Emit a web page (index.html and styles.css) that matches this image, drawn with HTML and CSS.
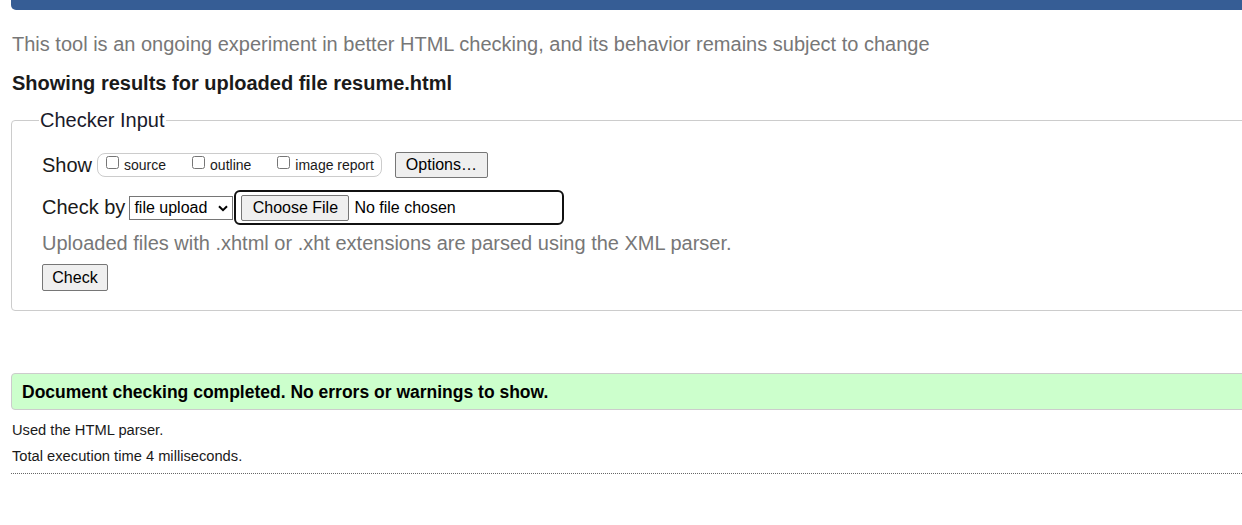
FILE: index.html
```html
<!DOCTYPE html>
<html lang="en">
<head>
<meta charset="utf-8">
<title>Nu Html Checker</title>
<link rel="stylesheet" href="styles.css">
</head>
<body>
<div class="page">
  <div class="topbar"></div>
  <p class="intro">This tool is an ongoing experiment in better HTML checking, and its behavior remains subject to change</p>
  <h2 class="showing">Showing results for uploaded file resume.html</h2>
  <fieldset class="checker">
    <legend>Checker Input</legend>
    <div class="row show-row">
      <span class="lbl">Show</span>
      <span class="opts">
        <label class="opt"><input type="checkbox">source</label>
        <label class="opt"><input type="checkbox">outline</label>
        <label class="opt"><input type="checkbox">image report</label>
      </span>
      <button class="btn options" type="button">Options…</button>
    </div>
    <div class="row by-row">
      <span class="lbl">Check by</span>
      <span class="selwrap">
        <select class="sel"><option>file upload</option></select>
        <svg class="chev" width="10" height="7" viewBox="0 0 10 7"><path d="M1 1.2 L5 5.2 L9 1.2" fill="none" stroke="#000" stroke-width="2"/></svg>
      </span>
      <span class="filewrap"><span class="btn choose">Choose File</span><span class="nofile">No file chosen</span></span>
    </div>
    <p class="hint">Uploaded files with .xhtml or .xht extensions are parsed using the XML parser.</p>
    <button class="btn check" type="button">Check</button>
  </fieldset>
  <div class="success"><p>Document checking completed. No errors or warnings to show.</p></div>
  <p class="details">Used the HTML parser.</p>
  <p class="details">Total execution time 4 milliseconds.</p>
  <hr class="dots">
</div>
</body>
</html>
```

FILE: styles.css
```css
html { overflow: hidden; }
body {
  margin: 0;
  font-family: "Liberation Sans", Arial, sans-serif;
  color: #111;
  background: #fff;
}
.page {
  padding-left: 11px;
  margin-right: -40px;
}
.topbar {
  height: 10px;
  background: #365d95;
  border-bottom-left-radius: 5px;
}
.intro {
  margin: 22px 0 0 1px;
  font-size: 20px;
  line-height: 24px;
  color: #777;
}
.showing {
  margin: 15px 0 0 1px;
  font-size: 20px;
  line-height: 24px;
  font-weight: bold;
  color: #1a1a1a;
}
.checker {
  margin: 13px 0 0 0;
  padding: 20px 30px 19px 30px;
  border: 1px solid #ccc;
  border-radius: 4px;
  min-width: 0;
}
.checker legend {
  font-size: 20px;
  line-height: 24px;
  padding: 0 1px;
  margin-left: -3px;
  color: #1a1a2a;
}
.row {
  display: flex;
  align-items: center;
  font-size: 20px;
}
.lbl { color: #1a1a1a; }
.opts {
  display: inline-flex;
  align-items: center;
  margin-left: 5px;
  height: 22px;
  border: 1px solid #ccc;
  border-radius: 8px;
  padding: 0 7px 0 6px;
  font-size: 14px;
}
.opt {
  display: inline-flex;
  align-items: center;
  margin-right: 24px;
  color: #1a1a1a;
}
.opt:last-child { margin-right: 0; }
.opt input {
  margin: 0 5px 0 2px;
  width: 13px;
  height: 13px;
  position: relative;
  top: -3px;
}
.btn {
  box-sizing: border-box;
  display: inline-flex;
  align-items: center;
  font-family: "Liberation Sans", Arial, sans-serif;
  font-size: 16px;
  color: #000;
  background: #efefef;
  border: 1px solid #767676;
  border-radius: 2px;
  padding: 0 9px;
  height: 26px;
  line-height: 20px;
}
.options { margin-left: 13px; height: 26px; width: 93px; justify-content: center; }
.by-row { margin-top: 12px; }
.selwrap {
  position: relative;
  display: inline-flex;
  margin-left: 4px;
}
.sel {
  box-sizing: border-box;
  -webkit-appearance: none;
  appearance: none;
  font-family: "Liberation Sans", Arial, sans-serif;
  font-size: 16px;
  width: 104px;
  height: 24px;
  border: 1px solid #767676;
  border-radius: 0;
  background: #fff;
  color: #000;
  padding: 0 0 0 4px;
}
.chev {
  position: absolute;
  right: 5px;
  top: 9px;
  pointer-events: none;
}
.filewrap {
  box-sizing: border-box;
  display: inline-flex;
  align-items: center;
  margin-left: 1px;
  width: 330px;
  height: 35px;
  border: 2px solid #111;
  border-radius: 6px;
  padding-left: 5px;
  font-size: 16px;
}
.choose { width: 108px; justify-content: center; height: 26px; }
.nofile { margin-left: 5px; color: #000; }
.hint {
  margin: 6px 0 0 0;
  font-size: 20px;
  line-height: 24px;
  color: #777;
}
.check {
  margin-top: 9px;
  width: 66px;
  justify-content: center;
  height: 27px;
}
.success {
  margin-top: 62px;
  background: #ccffcc;
  border: 1px solid #ccc;
  border-radius: 4px;
}
.success p {
  margin: 0;
  padding: 7px 10px 6px;
  font-size: 17.5px;
  line-height: 22px;
  font-weight: bold;
  color: #000;
}
.details {
  margin: 12px 0 0 1px;
  font-size: 14.7px;
  line-height: 16px;
  color: #1a1a1a;
}
.details + .details { margin-top: 10px; }
.dots {
  margin: 9px 0 0 0;
  border: 0;
  border-top: 1px dotted #666;
}
```
